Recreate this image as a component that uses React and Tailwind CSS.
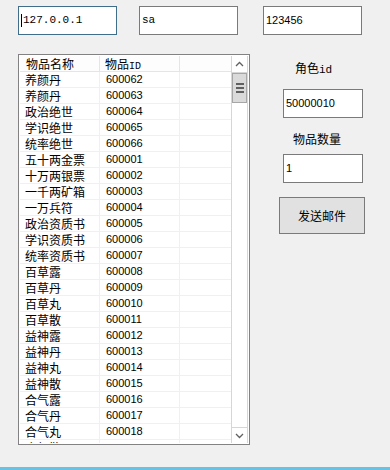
import React from 'react'

const items = [
  ['养颜丹', '600062'],
  ['养颜丹', '600063'],
  ['政治绝世', '600064'],
  ['学识绝世', '600065'],
  ['统率绝世', '600066'],
  ['五十两金票', '600001'],
  ['十万两银票', '600002'],
  ['一千两矿箱', '600003'],
  ['一万兵符', '600004'],
  ['政治资质书', '600005'],
  ['学识资质书', '600006'],
  ['统率资质书', '600007'],
  ['百草露', '600008'],
  ['百草丹', '600009'],
  ['百草丸', '600010'],
  ['百草散', '600011'],
  ['益神露', '600012'],
  ['益神丹', '600013'],
  ['益神丸', '600014'],
  ['益神散', '600015'],
  ['合气露', '600016'],
  ['合气丹', '600017'],
  ['合气丸', '600018'],
  ['合气散', '600019'],
]

const cjk = "font-['Noto_Sans_CJK_SC',sans-serif]"
const num = "font-['Liberation_Sans','Noto_Sans_CJK_SC',sans-serif]"
const mono = "font-['Liberation_Mono',monospace]"

function TextBox({ value, focused, className = '', font }) {
  return (
    <div
      className={`flex h-[29px] items-center bg-white pl-[2px] text-[11px] text-black ${font} ${
        focused ? 'border border-[#3f6d8a]' : 'border border-[#7a7a7a]'
      } ${className}`}
    >
      {focused && <span className="mr-px h-[13px] w-px bg-black" />}
      {value}
    </div>
  )
}

function ScrollBar() {
  return (
    <div className="flex w-[17px] flex-col border-x border-[#d6d6d6] bg-white">
      {/* up arrow */}
      <div className="flex h-[17px] items-center justify-center border-b border-[#d6d6d6]">
        <svg width="9" height="6" viewBox="0 0 9 6">
          <polyline points="1,5 4.5,1.5 8,5" fill="none" stroke="#606060" strokeWidth="1.3" />
        </svg>
      </div>
      {/* thumb */}
      <div className="flex h-[30px] flex-col items-center justify-center gap-[2px] border border-[#a6a6a6] bg-[#dadada]">
        <div className="h-[2px] w-[8px] bg-[#606060]" />
        <div className="h-[2px] w-[8px] bg-[#606060]" />
        <div className="h-[2px] w-[8px] bg-[#606060]" />
      </div>
      <div className="flex-1" />
      {/* down arrow */}
      <div className="flex h-[16px] items-center justify-center border-t border-[#d6d6d6]">
        <svg width="9" height="6" viewBox="0 0 9 6">
          <polyline points="1,1 4.5,4.5 8,1" fill="none" stroke="#606060" strokeWidth="1.3" />
        </svg>
      </div>
    </div>
  )
}

export default function App() {
  return (
    <div className="flex h-[470px] w-[390px] flex-col bg-[#f0f0f0] text-black">
      {/* Connection fields */}
      <div className="flex pl-[18px] pt-[6px]">
        <TextBox value="127.0.0.1" focused font={mono} className="w-[99px] text-[10px]" />
        <TextBox value="sa" font={mono} className="ml-[22px] w-[99px] text-[10px]" />
        <TextBox value="123456" font={num} className="ml-[25px] w-[99px]" />
      </div>

      <div className="mt-[19px] flex pl-[18px]">
        {/* Item list */}
        <div className="flex h-[391px] w-[232px] border border-[#828282] bg-white p-px">
          <div className="flex-1 overflow-hidden">
            {/* Header */}
            <div className="flex h-[16px] border-b border-[#e5e5e5] bg-[#fdfdfd] text-[12px] leading-[15px]">
              <div className={`w-[80px] border-r border-[#e5e5e5] pl-[6px] ${cjk}`}>物品名称</div>
              <div className={`w-[80px] border-r border-[#e5e5e5] pl-[5px] ${cjk}`}>
                物品<span className={`${mono} text-[10px]`}>ID</span>
              </div>
              <div className="flex-1" />
            </div>
            {items.map(([name, id], i) => (
              <div key={i} className="flex h-[16px] border-b border-[#f0f0f0] leading-[15px]">
                <div className={`w-[80px] border-r border-[#f0f0f0] pl-[5px] text-[12px] ${cjk}`}>{name}</div>
                <div className={`w-[80px] border-r border-[#f0f0f0] pl-[6px] text-[11px] ${num}`}>{id}</div>
                <div className="flex-1" />
              </div>
            ))}
          </div>
          <ScrollBar />
        </div>

        {/* Mail form */}
        <div className="ml-[29px] flex w-[86px] flex-col">
          <div className={`mt-[6px] h-[16px] pl-[16px] text-[12px] leading-[16px] ${cjk}`}>
            角色<span className={`${mono} text-[11px]`}>id</span>
          </div>
          <TextBox value="50000010" font={num} className="ml-[4px] mt-[13px] w-[80px]" />
          <div className={`mt-[13px] h-[16px] pl-[14px] text-[12px] leading-[16px] ${cjk}`}>物品数量</div>
          <TextBox value="1" font={num} className="ml-[4px] mt-[7px] w-[80px]" />
          <button
            type="button"
            className={`mt-[14px] h-[37px] w-[86px] border border-[#7a7a7a] bg-[#e1e1e1] text-[12px] ${cjk}`}
          >
            发送邮件
          </button>
        </div>
      </div>

      {/* Taskbar edge */}
      <div className="mt-auto h-[3px] bg-[#67c2e4]" />
    </div>
  )
}
